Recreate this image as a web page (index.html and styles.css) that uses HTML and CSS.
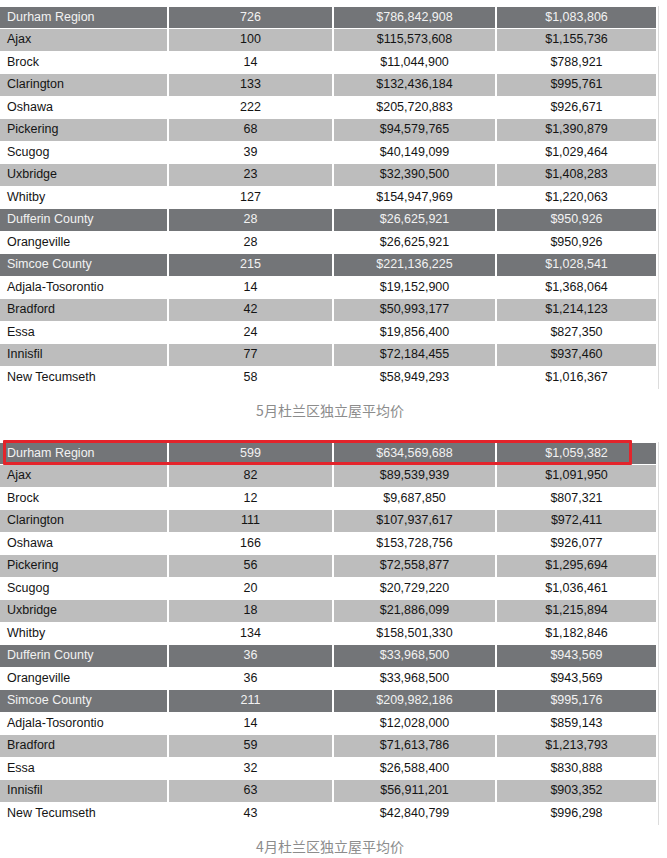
FILE: index.html
```html
<!DOCTYPE html>
<html lang="zh">
<head>
<meta charset="utf-8">
<title>杜兰区独立屋平均价</title>
<link rel="stylesheet" href="styles.css">
</head>
<body>
<section class="block">
  <div class="table-wrap">
    <table class="data">
      <colgroup><col class="c1"><col class="c2"><col class="c3"><col class="c4"></colgroup>
      <tbody>
        <tr class="dark"><td>Durham Region</td><td>726</td><td>$786,842,908</td><td>$1,083,806</td></tr>
        <tr class="light"><td>Ajax</td><td>100</td><td>$115,573,608</td><td>$1,155,736</td></tr>
        <tr class="white"><td>Brock</td><td>14</td><td>$11,044,900</td><td>$788,921</td></tr>
        <tr class="light"><td>Clarington</td><td>133</td><td>$132,436,184</td><td>$995,761</td></tr>
        <tr class="white"><td>Oshawa</td><td>222</td><td>$205,720,883</td><td>$926,671</td></tr>
        <tr class="light"><td>Pickering</td><td>68</td><td>$94,579,765</td><td>$1,390,879</td></tr>
        <tr class="white"><td>Scugog</td><td>39</td><td>$40,149,099</td><td>$1,029,464</td></tr>
        <tr class="light"><td>Uxbridge</td><td>23</td><td>$32,390,500</td><td>$1,408,283</td></tr>
        <tr class="white"><td>Whitby</td><td>127</td><td>$154,947,969</td><td>$1,220,063</td></tr>
        <tr class="dark"><td>Dufferin County</td><td>28</td><td>$26,625,921</td><td>$950,926</td></tr>
        <tr class="white"><td>Orangeville</td><td>28</td><td>$26,625,921</td><td>$950,926</td></tr>
        <tr class="dark"><td>Simcoe County</td><td>215</td><td>$221,136,225</td><td>$1,028,541</td></tr>
        <tr class="white"><td>Adjala-Tosorontio</td><td>14</td><td>$19,152,900</td><td>$1,368,064</td></tr>
        <tr class="light"><td>Bradford</td><td>42</td><td>$50,993,177</td><td>$1,214,123</td></tr>
        <tr class="white"><td>Essa</td><td>24</td><td>$19,856,400</td><td>$827,350</td></tr>
        <tr class="light"><td>Innisfil</td><td>77</td><td>$72,184,455</td><td>$937,460</td></tr>
        <tr class="white"><td>New Tecumseth</td><td>58</td><td>$58,949,293</td><td>$1,016,367</td></tr>
      </tbody>
    </table>
  </div>
  <p class="caption">5月杜兰区独立屋平均价</p>
</section>
<section class="block second">
  <div class="table-wrap">
    <table class="data">
      <colgroup><col class="c1"><col class="c2"><col class="c3"><col class="c4"></colgroup>
      <tbody>
        <tr class="dark"><td>Durham Region</td><td>599</td><td>$634,569,688</td><td>$1,059,382</td></tr>
        <tr class="light"><td>Ajax</td><td>82</td><td>$89,539,939</td><td>$1,091,950</td></tr>
        <tr class="white"><td>Brock</td><td>12</td><td>$9,687,850</td><td>$807,321</td></tr>
        <tr class="light"><td>Clarington</td><td>111</td><td>$107,937,617</td><td>$972,411</td></tr>
        <tr class="white"><td>Oshawa</td><td>166</td><td>$153,728,756</td><td>$926,077</td></tr>
        <tr class="light"><td>Pickering</td><td>56</td><td>$72,558,877</td><td>$1,295,694</td></tr>
        <tr class="white"><td>Scugog</td><td>20</td><td>$20,729,220</td><td>$1,036,461</td></tr>
        <tr class="light"><td>Uxbridge</td><td>18</td><td>$21,886,099</td><td>$1,215,894</td></tr>
        <tr class="white"><td>Whitby</td><td>134</td><td>$158,501,330</td><td>$1,182,846</td></tr>
        <tr class="dark"><td>Dufferin County</td><td>36</td><td>$33,968,500</td><td>$943,569</td></tr>
        <tr class="white"><td>Orangeville</td><td>36</td><td>$33,968,500</td><td>$943,569</td></tr>
        <tr class="dark"><td>Simcoe County</td><td>211</td><td>$209,982,186</td><td>$995,176</td></tr>
        <tr class="white"><td>Adjala-Tosorontio</td><td>14</td><td>$12,028,000</td><td>$859,143</td></tr>
        <tr class="light"><td>Bradford</td><td>59</td><td>$71,613,786</td><td>$1,213,793</td></tr>
        <tr class="white"><td>Essa</td><td>32</td><td>$26,588,400</td><td>$830,888</td></tr>
        <tr class="light"><td>Innisfil</td><td>63</td><td>$56,911,201</td><td>$903,352</td></tr>
        <tr class="white"><td>New Tecumseth</td><td>43</td><td>$42,840,799</td><td>$996,298</td></tr>
      </tbody>
    </table>
    <div class="highlight"></div>
  </div>
  <p class="caption">4月杜兰区独立屋平均价</p>
</section>
</body>
</html>
```
FILE: styles.css
```css
html, body {
  margin: 0;
  padding: 0;
  background: #ffffff;
}

body {
  width: 667px;
  font-family: "Liberation Sans", Arial, sans-serif;
  color: #141414;
}

.block {
  padding-top: 5.5px;
}

.block.second {
  padding-top: 22px;
}

.table-wrap {
  position: relative;
  width: 658px;
  border-right: 1.5px solid #dcdcdc;
}

.data {
  border-collapse: separate;
  border-spacing: 2px 1px;
  margin-left: -2px;
  table-layout: fixed;
  width: 660px;
  font-size: 12.5px;
}

.c1 { width: 167px; }
.c2 { width: 163px; }
.c3 { width: 161px; }
.c4 { width: 159px; }

.data td {
  height: 21.5px;
  padding: 0;
  text-align: center;
  vertical-align: middle;
  line-height: 21.5px;
  white-space: nowrap;
}

.data td:first-child {
  text-align: left;
  padding-left: 7px;
}

.dark td {
  background: #737578;
  color: #f2f2f2;
}

.light td {
  background: #bdbdbd;
}

.white td {
  background: #ffffff;
}

.highlight {
  position: absolute;
  left: 3px;
  top: -2px;
  width: 623px;
  height: 19px;
  border: 3px solid #e3242b;
  border-radius: 1px;
}

.caption {
  margin: 10.5px 0 0;
  width: 660px;
  text-align: center;
  font-family: "Noto Sans CJK SC", "Liberation Sans", sans-serif;
  font-size: 14px;
  line-height: 20px;
  color: #8c8c8c;
}
```
